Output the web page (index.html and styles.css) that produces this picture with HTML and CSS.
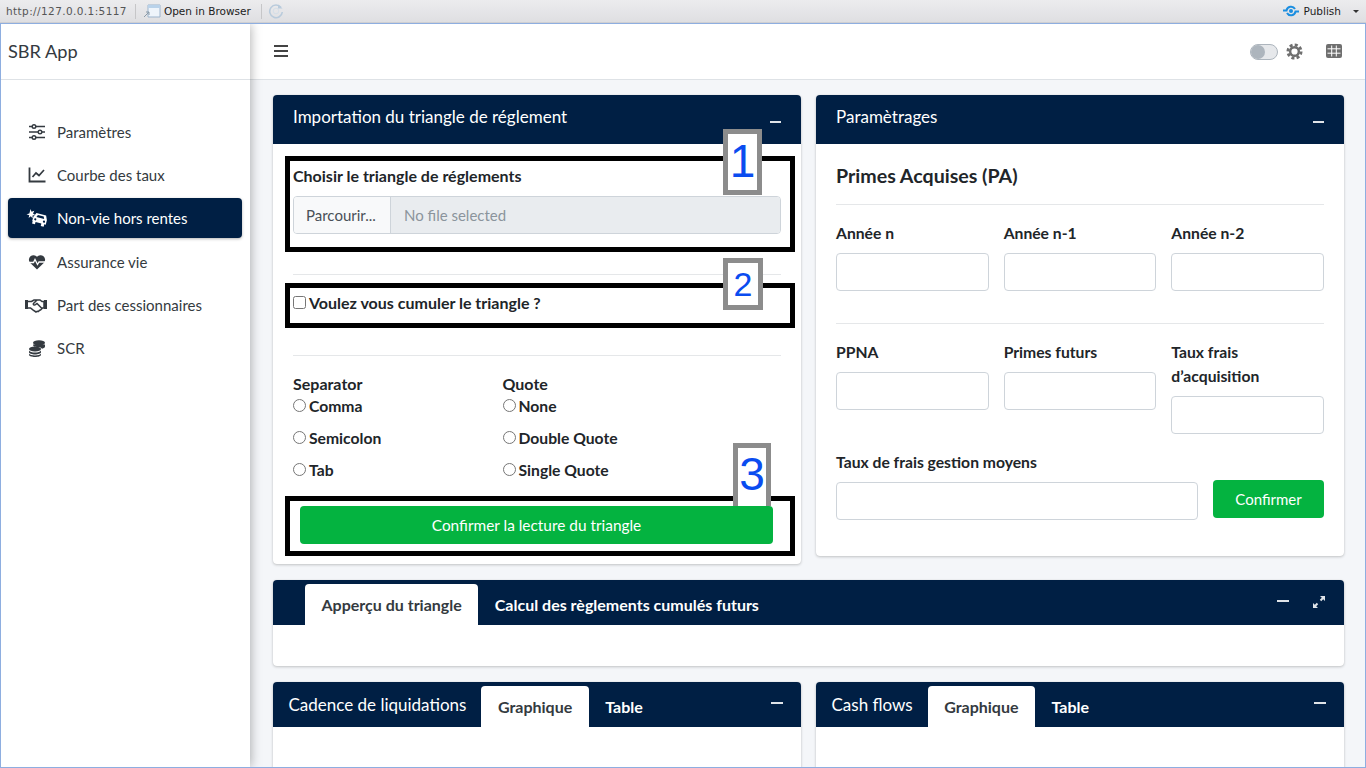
FILE: index.html
```html
<!DOCTYPE html>
<html lang="fr">
<head>
    <meta charset="UTF-8">
    <title>SBR App</title>
    <link rel="stylesheet" href="styles.css">
</head>
<body>
    <div class="ide-bar">
        <span class="ide-url">http://127.0.0.1:5117</span>
        <span class="ide-sep"></span>
        <svg class="ide-open" viewBox="0 0 18 14"><path d="M5 1h12v12H5z" fill="#eef4fb" stroke="#9db4cc"/><path d="M5 1h12v3H5z" fill="#b9d2ea"/><path d="M1 13l5-5M3 8h3v3" fill="none" stroke="#8a9aa8"/></svg>
        <span class="ide-text">Open in Browser</span>
        <span class="ide-sep ide-sep-wide"></span>
        <svg class="ide-reload" viewBox="0 0 16 16"><path d="M13 4.500A6.300 6.300 0 1 0 14.300 9" fill="none" stroke="#b9cbdc" stroke-width="1.600"/><path d="M10 1.500v4h4.500z" fill="#b9cbdc"/><circle cx="8" cy="8" r="2.800" fill="none" stroke="#d5dfe8"/></svg>
        <span class="ide-publish">
            <svg class="publish-icon" viewBox="0 0 16 12"><path d="M0 5.500h3.500A4.600 4.600 0 0 1 12 4" fill="none" stroke="#1b8ee0" stroke-width="2"/><path d="M16 6.500h-3.500A4.600 4.600 0 0 1 4 8" fill="none" stroke="#1b8ee0" stroke-width="2"/><circle cx="8" cy="6" r="2" fill="#1b8ee0"/></svg>
            <span class="ide-text">Publish</span>
            <span class="caret"></span>
        </span>
    </div>

    <div class="window">
        <aside class="sidebar">
            <div class="brand">SBR App</div>
            <nav class="side-nav">
                <a class="side-link">
                    <svg class="side-icon" viewBox="0 0 18 18"><path d="M1 3.500h16M1 9h16M1 14.500h16" stroke="currentColor" stroke-width="1.500"/><circle cx="6" cy="3.500" r="1.800" fill="#fff" stroke="currentColor" stroke-width="1.400"/><circle cx="12" cy="9" r="1.800" fill="#fff" stroke="currentColor" stroke-width="1.400"/><circle cx="6" cy="14.500" r="1.800" fill="#fff" stroke="currentColor" stroke-width="1.400"/></svg>
                    Paramètres
                </a>
                <a class="side-link">
                    <svg class="side-icon" viewBox="0 0 18 18"><path d="M1.500 1.500v14h16" fill="none" stroke="currentColor" stroke-width="1.800"/><path d="M4.500 11l3.500-4 3 2.500 5-5.500" fill="none" stroke="currentColor" stroke-width="1.700"/></svg>
                    Courbe des taux
                </a>
                <a class="side-link active">
                    <svg class="side-icon icon-car" viewBox="0 0 22 18"><path d="M4.500 0l1 2.800L8.300 1.800 7 4.400l2.200 1.500-2.700.6.200 2.900-1.900-2.100L2.600 9l.7-2.800L.5 5.200l2.900-.6z" fill="currentColor"/><g transform="rotate(15 14 10)"><path d="M7 14V9.500L9 5h10l2 4.500V14h-1.500v2.500h-3V14h-6v2.500h-3V14z" fill="currentColor"/><path d="M10 9l1-2.300h6L18 9z" fill="#001f44"/><circle cx="9.500" cy="11.500" r="1.100" fill="#001f44"/><circle cx="18.500" cy="11.500" r="1.100" fill="#001f44"/></g></svg>
                    Non-vie hors rentes
                </a>
                <a class="side-link">
                    <svg class="side-icon" viewBox="0 0 18 18"><path d="M9 16.500L2 9.800A4.500 4.500 0 0 1 9 3.800a4.500 4.500 0 0 1 7 6z" fill="currentColor"/><path d="M0.500 9.500h5l1.500-3 2.500 5 1.500-2.500h7" fill="none" stroke="#fff" stroke-width="1.300"/></svg>
                    Assurance vie
                </a>
                <a class="side-link">
                    <svg class="side-icon icon-wide" viewBox="0 0 22 16"><path d="M0 3h3v9H0zM19 3h3v9h-3z" fill="currentColor"/><path d="M3 4.500h3.500L9 3h3l-3.500 3.500c-.7 1 .7 2 2 1.200L12 6.500l5 5-1.500 1.500-1 .2-1 1.200-1.300-.2L11 15l-2.800-1.800L5.500 11H3M12 3h3l2 1.500h2v6.500h-2" fill="none" stroke="currentColor" stroke-width="1.500"/></svg>
                    Part des cessionnaires
                </a>
                <a class="side-link">
                    <svg class="side-icon" viewBox="0 0 18 18"><ellipse cx="11" cy="3.800" rx="6" ry="2.600" fill="currentColor"/><path d="M17 5.500v2c0 1-1 1.800-3 2.300-.5-1-1.500-1.500-3-1.800-3 0-6 0-6-2.500z" fill="currentColor"/><ellipse cx="7" cy="10" rx="6" ry="2.500" fill="currentColor"/><path d="M1 11.500c1 1.500 3 2 6 2s5-.5 6-2v1.800c0 1.300-3 2.200-6 2.200s-6-.9-6-2.200z" fill="currentColor"/><path d="M1 14.800c1 1 3 1.700 6 1.700s5-.7 6-1.700V16c0 1-3 2-6 2s-6-1-6-2z" fill="currentColor"/></svg>
                    SCR
                </a>
            </nav>
        </aside>

        <div class="main">
            <header class="navbar">
                <svg class="burger" viewBox="0 0 14 12"><path d="M0 1h14M0 6h14M0 11h14" stroke="#444" stroke-width="1.800"/></svg>
                <div class="navbar-right">
                    <span class="toggle"><span class="toggle-knob"></span></span>
                    <svg class="gear" viewBox="0 0 18 18"><circle cx="9" cy="9" r="7" fill="none" stroke="#6f6f6f" stroke-width="3" stroke-dasharray="3.200 2.300"/><circle cx="9" cy="9" r="4.600" fill="none" stroke="#6f6f6f" stroke-width="2.600"/></svg>
                    <svg class="grid-icon" viewBox="0 0 16 14"><rect width="16" height="14" rx="2" fill="#6f6f6f"/><path d="M1.500 4.800h13M1.500 9.200h13M5.700 1.500v11M10.300 1.500v11" stroke="#fff" stroke-width="1"/></svg>
                </div>
            </header>

            <main class="content">
                <div class="row">
                    <section class="card">
                        <div class="card-head">
                            <h3 class="card-title">Importation du triangle de réglement</h3>
                            <span class="minus"></span>
                        </div>
                        <div class="card-body">
                            <label class="field-label">Choisir le triangle de réglements</label>
                            <div class="file-input">
                                <span class="file-btn">Parcourir...</span>
                                <span class="file-name">No file selected</span>
                            </div>
                            <hr class="rule">
                            <label class="check-row"><input type="checkbox">Voulez vous cumuler le triangle ?</label>
                            <hr class="rule">
                            <div class="radio-cols">
                                <div class="radio-col">
                                    <div class="radio-title">Separator</div>
                                    <label class="radio-row"><input type="radio" name="sep">Comma</label>
                                    <label class="radio-row"><input type="radio" name="sep">Semicolon</label>
                                    <label class="radio-row"><input type="radio" name="sep">Tab</label>
                                </div>
                                <div class="radio-col">
                                    <div class="radio-title">Quote</div>
                                    <label class="radio-row"><input type="radio" name="quote">None</label>
                                    <label class="radio-row"><input type="radio" name="quote">Double Quote</label>
                                    <label class="radio-row"><input type="radio" name="quote">Single Quote</label>
                                </div>
                            </div>
                            <button class="btn-green btn-block">Confirmer la lecture du triangle</button>
                        </div>
                        <!-- annotations drawn over the form -->
                        <div class="mark mark-1"></div>
                        <div class="mark mark-2"></div>
                        <div class="mark mark-3"></div>
                        <div class="mark-num num-1">1</div>
                        <div class="mark-num num-2">2</div>
                        <div class="mark-num num-3">3</div>
                    </section>

                    <section class="card">
                        <div class="card-head">
                            <h3 class="card-title">Paramètrages</h3>
                            <span class="minus"></span>
                        </div>
                        <div class="card-body">
                            <h4 class="sub-title">Primes Acquises (PA)</h4>
                            <hr class="rule rule-sm">
                            <div class="form-grid">
                                <div><label class="field-label">Année n</label><input class="text-input" type="text"></div>
                                <div><label class="field-label">Année n-1</label><input class="text-input" type="text"></div>
                                <div><label class="field-label">Année n-2</label><input class="text-input" type="text"></div>
                            </div>
                            <hr class="rule rule-md">
                            <div class="form-grid">
                                <div><label class="field-label">PPNA</label><input class="text-input" type="text"></div>
                                <div><label class="field-label">Primes futurs</label><input class="text-input" type="text"></div>
                                <div><label class="field-label">Taux frais d’acquisition</label><input class="text-input" type="text"></div>
                            </div>
                            <div class="confirm-row">
                                <div class="confirm-field"><label class="field-label">Taux de frais gestion moyens</label><input class="text-input" type="text"></div>
                                <button class="btn-green btn-confirm">Confirmer</button>
                            </div>
                        </div>
                    </section>
                </div>

                <section class="card tab-card">
                    <div class="tab-head tab-head-wide">
                        <span class="tab active tab-first">Apperçu du triangle</span>
                        <span class="tab">Calcul des règlements cumulés futurs</span>
                        <div class="head-tools">
                            <span class="minus minus-tab"></span>
                            <svg class="expand" viewBox="0 0 14 14"><path d="M8 1h5v5l-1.800-1.800-2 2-1.400-1.400 2-2zM6 13H1V8l1.800 1.800 2-2 1.400 1.400-2 2z" fill="#dfe3e8"/></svg>
                        </div>
                    </div>
                    <div class="tab-body"></div>
                </section>

                <div class="row">
                    <section class="card tab-card">
                        <div class="tab-head">
                            <span class="tab-title">Cadence de liquidations</span>
                            <span class="tab active">Graphique</span>
                            <span class="tab">Table</span>
                            <div class="head-tools"><span class="minus minus-tab"></span></div>
                        </div>
                        <div class="tab-body tab-body-tall"></div>
                    </section>
                    <section class="card tab-card">
                        <div class="tab-head">
                            <span class="tab-title">Cash flows</span>
                            <span class="tab active">Graphique</span>
                            <span class="tab">Table</span>
                            <div class="head-tools"><span class="minus minus-tab"></span></div>
                        </div>
                        <div class="tab-body tab-body-tall"></div>
                    </section>
                </div>
            </main>
        </div>
    </div>
</body>
</html>
```

FILE: styles.css
```css
html, body {
    margin: 0;
    height: 100%;
    overflow: hidden;
}

body {
    font-family: Lato, "Noto Sans", sans-serif;
    font-size: 15px;
    line-height: 24px;
    color: #212529;
    background: #f4f6f9;
}

/* ide strip on top */
.ide-bar {
    height: 22px;
    display: flex;
    align-items: center;
    padding: 0 6px;
    background: linear-gradient(#ececee, #dfdfe2);
    border-bottom: 1px solid #cfcfd2;
    font-family: "DejaVu Sans", sans-serif;
    font-size: 10.5px;
    color: #1c1c1c;
}

.ide-url {
    color: #555;
    letter-spacing: 0.4px;
}

.ide-sep {
    width: 1px;
    height: 15px;
    background: #c6c6c8;
    margin: 0 7px 0 8px;
}

.ide-sep-wide {
    margin-left: 10px;
    margin-right: 6px;
}

.ide-open {
    width: 18px;
    height: 14px;
    margin: 0 3px 0 0;
}

.ide-reload {
    width: 16px;
    height: 16px;
}

.ide-publish {
    margin-left: auto;
    display: flex;
    align-items: center;
    padding-right: 1px;
}

.publish-icon {
    width: 16px;
    height: 12px;
    margin-right: 5px;
}

.caret {
    width: 0;
    height: 0;
    margin-left: 12px;
    border-left: 3px solid transparent;
    border-right: 3px solid transparent;
    border-top: 3px solid #333;
}

/* app window */
.window {
    height: 743px;
    display: flex;
    border: 1px solid #8eaee0;
    overflow: hidden;
}

.sidebar {
    width: 249px;
    flex: none;
    background: #fff;
    box-shadow: 0 0 11px rgba(0, 0, 0, 0.35);
    position: relative;
    z-index: 2;
}

.brand {
    height: 55px;
    padding-left: 7px;
    font-size: 18.2px;
    line-height: 55px;
    color: #343a40;
    border-bottom: 1px solid #dee2e6;
}

.side-nav {
    padding: 32px 8px 0 7px;
}

.side-link {
    height: 40px;
    margin-bottom: 3.2px;
    display: flex;
    align-items: center;
    padding-left: 20px;
    border-radius: 4px;
    color: #343a40;
}

.side-link.active {
    background: #001f44;
    color: #fff;
    box-shadow: 0 1px 3px rgba(0, 0, 0, 0.3);
}

.side-icon {
    width: 18px;
    height: 18px;
    margin-right: 11px;
    flex: none;
}

.icon-wide {
    width: 22px;
    margin-left: -3px;
    margin-right: 10px;
}

.icon-car {
    width: 22px;
    margin-left: -2px;
    margin-right: 9px;
}

.main {
    flex: 1;
    min-width: 0;
}

.navbar {
    height: 55px;
    display: flex;
    align-items: center;
    padding: 0 23px 0 24px;
    background: #fff;
    border-bottom: 1px solid #dee2e6;
}

.burger {
    width: 14px;
    height: 12px;
    margin-bottom: 1px;
}

.navbar-right {
    margin-left: auto;
    display: flex;
    align-items: center;
}

.toggle {
    width: 28px;
    height: 16px;
    box-sizing: border-box;
    border: 1px solid #adb5bd;
    border-radius: 8px;
    background: #e6e8eb;
    display: block;
}

.toggle-knob {
    display: block;
    width: 14px;
    height: 14px;
    border-radius: 50%;
    background: #adb5bd;
}

.gear {
    width: 17px;
    height: 17px;
    margin-left: 8px;
}

.grid-icon {
    width: 16px;
    height: 14px;
    margin-left: 23px;
    margin-bottom: 2px;
}

.content {
    padding: 15px 21px 0 23px;
}

.row {
    display: grid;
    grid-template-columns: 528px 528px;
    gap: 15px;
    align-items: start;
}

.card {
    position: relative;
    background: #fff;
    border-radius: 4px;
    box-shadow: 0 0 1px rgba(0, 0, 0, 0.13), 0 1px 3px rgba(0, 0, 0, 0.2);
    margin-bottom: 16px;
}

.card-head {
    height: 49px;
    display: flex;
    align-items: center;
    padding: 0 20px;
    background: #001f44;
    color: #fff;
    border-radius: 4px 4px 0 0;
}

.card-title {
    margin: 0 0 6px;
    font-size: 17px;
    font-weight: 400;
}

.minus {
    margin-left: auto;
    width: 11px;
    height: 1.5px;
    margin-top: 5px;
    background: #dfe3e8;
}

.card-body {
    padding: 20px;
}

.field-label {
    display: block;
    margin-bottom: 8px;
    font-size: 16px;
    font-weight: 700;
}

.file-input {
    height: 38px;
    display: flex;
    box-sizing: border-box;
    border: 1px solid #ced4da;
    border-radius: 4px;
    overflow: hidden;
}

.file-btn {
    width: 97px;
    box-sizing: border-box;
    padding-left: 12px;
    line-height: 36px;
    background: #f8f9fa;
    border-right: 1px solid #ced4da;
    color: #495057;
}

.file-name {
    flex: 1;
    padding-left: 13px;
    line-height: 36px;
    background: #e9ecef;
    color: #8b949c;
}

.rule {
    height: 1px;
    margin: 40px 0 16px;
    border: 0;
    background: #e5e7e9;
}

.rule-sm {
    margin: 16px 0;
}

.rule-md {
    margin: 32px 0 16px;
}

.check-row {
    display: flex;
    align-items: center;
    font-size: 16px;
    font-weight: 700;
}

.check-row input {
    width: 13px;
    height: 13px;
    margin: 0 3px 2px 0;
}

.radio-cols {
    display: flex;
}

.radio-col {
    width: 209.5px;
}

.radio-title {
    height: 22px;
    font-size: 16px;
    font-weight: 700;
}

.radio-row {
    display: flex;
    align-items: center;
    height: 24px;
    margin-bottom: 8px;
    font-size: 15.7px;
    font-weight: 700;
}

.radio-row input {
    width: 13px;
    height: 13px;
    margin: 0 3px 2px 0;
}

.btn-green {
    height: 38px;
    border: 0;
    border-radius: 4px;
    background: #04b340;
    color: #fff;
    font-family: inherit;
    font-size: 15px;
}

.btn-block {
    display: block;
    width: 473px;
    margin: 16px 0 0 7px;
    font-size: 15.4px;
}

.sub-title {
    margin: 0;
    font-size: 19.6px;
    font-weight: 700;
}

.form-grid {
    display: grid;
    grid-template-columns: repeat(3, 1fr);
    gap: 15px;
}

.form-grid .field-label,
.confirm-field .field-label {
    font-size: 15.7px;
}

.text-input {
    display: block;
    width: 100%;
    height: 38px;
    box-sizing: border-box;
    border: 1px solid #ced4da;
    border-radius: 4px;
    background: #fff;
}

.confirm-row {
    display: flex;
    gap: 15px;
    margin: 16px 0;
}

.confirm-field {
    width: 362px;
}

.btn-confirm {
    width: 111px;
    margin-top: 30px;
}

/* numbered boxes put over the form */
.mark {
    position: absolute;
    left: 12px;
    width: 510px;
    box-sizing: border-box;
    border: 5px solid #000;
}

.mark-1 {
    top: 61px;
    height: 96px;
}

.mark-2 {
    top: 188px;
    height: 45px;
}

.mark-3 {
    top: 401px;
    height: 60px;
}

.mark-num {
    position: absolute;
    box-sizing: border-box;
    border: 5px solid #8c8c8c;
    background: #fff;
    color: #0a4cf0;
    font-family: "Liberation Sans", sans-serif;
    text-align: center;
}

.num-1 {
    left: 450px;
    top: 34px;
    width: 39px;
    height: 66px;
    font-size: 46px;
    line-height: 54px;
}

.num-2 {
    left: 450px;
    top: 163px;
    width: 40px;
    height: 52px;
    font-size: 34px;
    line-height: 42px;
}

.num-3 {
    left: 460px;
    top: 348px;
    width: 38px;
    height: 63px;
    border-bottom: 0;
    font-size: 46px;
    line-height: 52px;
}

/* cards with tabs */
.tab-head {
    height: 45px;
    display: flex;
    align-items: flex-end;
    background: #001f44;
    color: #fff;
    border-radius: 4px 4px 0 0;
    padding-left: 15.5px;
}

.tab-head-wide {
    padding-left: 32px;
}

.tab-title {
    align-self: center;
    margin-right: 15px;
    font-size: 17px;
}

.tab {
    height: 41px;
    padding: 0 16.5px;
    font-size: 16px;
    font-weight: 700;
    line-height: 42px;
    color: #fff;
    border-radius: 4px 4px 0 0;
}

.tab.active {
    background: #fff;
    color: #343a40;
}

.head-tools {
    margin-left: auto;
    align-self: center;
    display: flex;
    align-items: center;
    padding-right: 18px;
}

.minus-tab {
    margin-top: 0;
    margin-bottom: 3px;
    width: 12px;
}

.expand {
    width: 14px;
    height: 14px;
    margin-left: 23px;
    margin-bottom: 1px;
}

.tab-body {
    height: 41px;
}

.tab-body-tall {
    height: 120px;
}
```
